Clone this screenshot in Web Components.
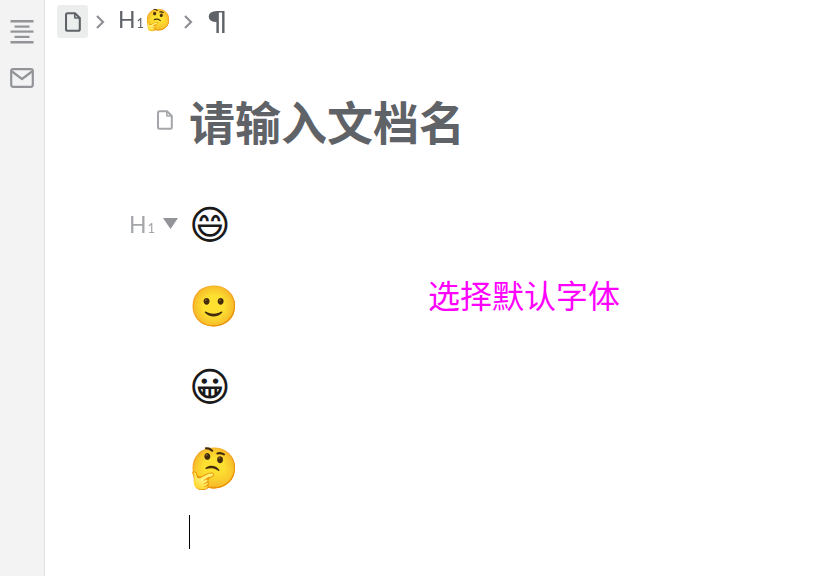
<!DOCTYPE html>
<html lang="zh"><head><meta charset="utf-8"><style>
html,body{margin:0;height:100%;background:#fff;font-family:"Noto Sans CJK SC","Noto Sans",sans-serif}
body{width:826px;height:576px;overflow:hidden;position:relative;display:flex}
</style></head><body>
<side-dock></side-dock>
<doc-pane></doc-pane>
<script>
function def(name,html){customElements.define(name,class extends HTMLElement{constructor(){super();this.attachShadow({mode:'open'}).innerHTML=html}})}
const fileIcon=(w,h,c,s)=>`<svg width="${w}" height="${h}" viewBox="0 0 16 20" fill="none" stroke="${c}" stroke-width="${s}" stroke-linejoin="round"><path d="M2.500 1.200h7.500l4.800 4.800v11.300a1.500 1.500 0 0 1-1.500 1.500h-10.800a1.500 1.500 0 0 1-1.500-1.500v-14.600a1.500 1.500 0 0 1 1.500-1.500z"/><path d="M9.800 1.200v4.100a.7.7 0 0 0 .7.7h4.300" stroke-width="${s*.8}"/></svg>`;
def('side-dock',`<style>:host{display:flex;flex-direction:column;align-items:center;box-sizing:border-box;width:45px;height:576px;background:#f3f3f3;border-right:1px solid #e2e2e2;padding:20px 0 0;gap:24px;flex:none}svg{display:block}</style>
<svg width="24" height="24" viewBox="0 0 24 24" fill="#929498"><rect x="0.500" y="0" width="23" height="2.500"/><rect x="4.500" y="5.500" width="15" height="2.200"/><rect x="0.500" y="10.500" width="23" height="2.200"/><rect x="4.500" y="15.800" width="15" height="2.200"/><rect x="0.500" y="21" width="23" height="2.500"/></svg>
<svg width="24" height="20" viewBox="0 0 24 20" fill="none" stroke="#929498" stroke-width="2.200" stroke-linejoin="round"><rect x="1.200" y="1.200" width="21.600" height="17.600" rx="2"/><path d="M2 3.500l10 7.500 10-7.500"/></svg>`);
def('bread-crumb',`<style>:host{display:flex;align-items:center;height:33px;padding:5px 0 0 12px;color:#5f6368;font-family:Lato,"Noto Sans",sans-serif}
.doc{width:31px;height:33px;background:#eceded;border-radius:3px;display:flex;align-items:center;justify-content:center}
.chev{margin:0 13px 0 8px;display:block}.h{font-size:23px;line-height:33px;font-weight:400;display:flex;align-items:baseline;will-change:transform}.h small{font-size:13px;margin-left:1px}
.e{font-size:21px;line-height:33px;font-family:"Noto Color Emoji",sans-serif;margin-left:1px;margin-top:-2px}.p{font:26px/33px "DejaVu Sans",sans-serif;will-change:transform;transform:scaleX(1.35);margin:1px 0 0 3px}</style>
<span class="doc">${fileIcon(16,20,'#5f6368',2.100)}</span>
<svg class="chev" width="9" height="14" viewBox="0 0 9 14" fill="none" stroke="#8e9095" stroke-width="2.200"><path d="M1 1l6 6-6 6"/></svg>
<span class="h">H<small>1</small></span><span class="e">🤔</span>
<svg class="chev" style="margin-left:13px" width="9" height="14" viewBox="0 0 9 14" fill="none" stroke="#8e9095" stroke-width="2.200"><path d="M1 1l6 6-6 6"/></svg>
<span class="p">¶</span>`);
def('doc-title',`<style>:host{display:flex;align-items:center;height:66px;margin-top:49px;padding-left:144px;position:relative}
.i{position:absolute;left:112px;top:23px;display:block}
h1{margin:0;font:700 46px/66px "Noto Sans CJK SC",sans-serif;color:#5f6368}</style>
<span class="i">${fileIcon(16,20,'#a4a6a9',2)}</span><h1>请输入文档名</h1>`);
def('emoji-line',`<style>:host{display:block;height:81px;margin-left:144px;position:relative;font:40px/81px "Noto Color Emoji",sans-serif;color:#000}
:host([mono]){font-family:"DejaVu Sans",sans-serif;color:#1a1a1a}</style><slot></slot>`);
def('h-gutter',`<style>:host{position:absolute;left:-60px;top:0;display:flex;align-items:baseline;color:#a4a6a9;font:400 23px/78px Lato,sans-serif;will-change:transform}small{font-size:13px;margin-left:1px}
svg{align-self:center;margin-left:8px;margin-top:-6px}</style>H<small>1</small><svg width="15" height="11" viewBox="0 0 15 11" fill="#929498"><path d="M0 0h15l-7.500 11z"/></svg>`);
def('doc-pane',`<style>:host{display:block;flex:1;position:relative;min-width:0}
.lines{margin-top:32px}.caret{display:block;margin-left:144px;width:1px;height:34px;background:#000;margin-top:6px}
.hint{position:absolute;left:383px;top:270px;font:400 32px/48px "Noto Sans CJK SC",sans-serif;color:#ff00ff}</style>
<bread-crumb></bread-crumb><doc-title></doc-title>
<div class="lines"><emoji-line mono><h-gutter></h-gutter>😄</emoji-line><emoji-line>🙂</emoji-line><emoji-line mono>😀</emoji-line><emoji-line>🤔</emoji-line></div>
<i class="caret"></i><div class="hint">选择默认字体</div>`);
</script></body></html>
